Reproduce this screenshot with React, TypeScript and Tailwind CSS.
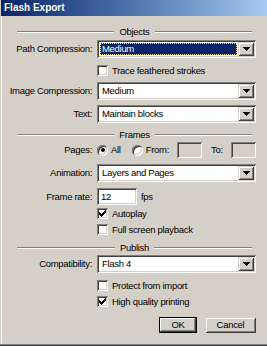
import React from 'react';

const sunken =
  'shadow-[inset_1px_1px_#808080,inset_-1px_-1px_#ffffff,inset_2px_2px_#404040,inset_-2px_-2px_#d4d0c8]';
const raised =
  'shadow-[inset_1px_1px_#d4d0c8,inset_-1px_-1px_#404040,inset_2px_2px_#ffffff,inset_-2px_-2px_#808080]';

const Arrow = () => (
  <svg width="7" height="4" viewBox="0 0 7 4" shapeRendering="crispEdges">
    <path d="M0 0h7v1h-1v1h-1v1h-1v1h-1v-1h-1v-1h-1v-1h-1z" fill="#000" />
  </svg>
);

const Tick = () => (
  <svg width="7" height="7" viewBox="0 0 7 7" shapeRendering="crispEdges">
    <path
      d="M6 0h1v1h-1z M5 1h2v1h-2z M0 2h1v1h-1z M4 2h3v1h-3z M0 3h2v1h-2z M3 3h3v1h-3z M0 4h5v1h-5z M1 5h3v1h-3z M2 6h1v1h-1z"
      fill="#000"
    />
  </svg>
);

interface SelectProps {
  value: string;
  focused?: boolean;
}

const Select: React.FC<SelectProps> = ({ value, focused }) => (
  <div className={`flex h-[18px] w-[159px] bg-white p-[2px] ${sunken}`}>
    <div className="flex flex-1 items-stretch p-[1px]">
      {focused ? (
        <span className="flex w-full items-center border border-dotted border-[#e8e2a8] bg-[#0a246a] pl-[1px] text-white">
          {value}
        </span>
      ) : (
        <span className="flex items-center pl-[2px]">{value}</span>
      )}
    </div>
    <div className={`flex w-[16px] items-center justify-center bg-[#d4d0c8] ${raised}`}>
      <Arrow />
    </div>
  </div>
);

const Row: React.FC<{ label: string; className?: string; children: React.ReactNode }> = ({
  label,
  className,
  children,
}) => (
  <div className={`flex items-center ${className ?? ''}`}>
    <span className="w-[92px] text-right">{label}</span>
    <div className="ml-[5px] flex items-center">{children}</div>
  </div>
);

const Check: React.FC<{ label: string; checked?: boolean; className?: string }> = ({
  label,
  checked,
  className,
}) => (
  <div className={`flex h-[11px] items-center pl-[97px] ${className ?? ''}`}>
    <span className={`flex h-[11px] w-[11px] items-center justify-center bg-white ${sunken}`}>
      {checked && <Tick />}
    </span>
    <span className="ml-[4px]">{label}</span>
  </div>
);

const Radio: React.FC<{ on?: boolean }> = ({ on }) => (
  <span
    className={`flex h-[11px] w-[11px] items-center justify-center rounded-full bg-white ${sunken}`}
  >
    {on && <span className="h-[4px] w-[4px] rounded-full bg-black" />}
  </span>
);

const Group: React.FC<{ title: string; className?: string }> = ({ title, className }) => (
  <div className={`flex h-[12px] items-center gap-[5px] pl-[17px] pr-[15px] ${className ?? ''}`}>
    <div className="h-[2px] flex-1 border-t border-b border-t-[#808080] border-b-white" />
    <span>{title}</span>
    <div className="h-[2px] flex-1 border-t border-b border-t-[#808080] border-b-white" />
  </div>
);

export default function App() {
  return (
    <div className="flex h-[346px] w-[267px] flex-col bg-[#d4d0c8] font-['Liberation_Sans',Arial,sans-serif] text-[9.5px] leading-none tracking-[-0.3px] text-black">
      <div className="flex h-[16px] items-center border-l border-[#d4d0c8] bg-linear-to-r from-[#0a246a] to-[#a6caf0] pl-[3px] text-[10px] font-bold tracking-[0px] text-white">
        Flash Export
      </div>

      <div className="flex flex-1 flex-col shadow-[inset_0_-1px_#404040,inset_0_-2px_#808080,inset_1px_0_#d4d0c8,inset_2px_0_#ffffff]">
        <Group title="Objects" className="mt-[10px]" />
        <Row label="Path Compression:" className="mt-[2px]">
          <Select value="Medium" focused />
        </Row>
        <Check label="Trace feathered strokes" className="mt-[7px]" />
        <Row label="Image Compression:" className="mt-[6px]">
          <Select value="Medium" />
        </Row>
        <Row label="Text:" className="mt-[5px]">
          <Select value="Maintain blocks" />
        </Row>

        <Group title="Frames" className="mt-[6px]" />
        <Row label="Pages:" className="mt-[1px]">
          <Radio on />
          <span className="ml-[3px]">All</span>
          <span className="ml-[11px]">
            <Radio />
          </span>
          <span className="ml-[3px]">From:</span>
          <span className={`ml-[8px] h-[16px] w-[25px] bg-[#d4d0c8] ${sunken}`} />
          <span className="ml-[9px]">To:</span>
          <span className={`ml-[8px] h-[16px] w-[25px] bg-[#d4d0c8] ${sunken}`} />
        </Row>
        <Row label="Animation:" className="mt-[6px]">
          <Select value="Layers and Pages" />
        </Row>
        <Row label="Frame rate:" className="mt-[6px]">
          <span className={`flex h-[17px] w-[40px] items-center bg-white pl-[4px] ${sunken}`}>12</span>
          <span className="ml-[4px]">fps</span>
        </Row>
        <Check label="Autoplay" checked className="mt-[3px]" />
        <Check label="Full screen playback" className="mt-[5px]" />

        <Group title="Publish" className="mt-[7px]" />
        <Row label="Compatibility:" className="mt-[1px]">
          <Select value="Flash 4" />
        </Row>
        <Check label="Protect from import" className="mt-[7px]" />
        <Check label="High quality printing" checked className="mt-[5px]" />

        <div className="mt-[10px] flex justify-end gap-[8px] pr-[11px]">
          <button className="h-[16px] w-[38px] border border-black bg-[#d4d0c8] p-0 shadow-[inset_-1px_-1px_#404040,inset_1px_1px_#ffffff,inset_-2px_-2px_#808080]">
            OK
          </button>
          <button className={`h-[16px] w-[51px] bg-[#d4d0c8] p-0 ${raised}`}>Cancel</button>
        </div>
      </div>
    </div>
  );
}
